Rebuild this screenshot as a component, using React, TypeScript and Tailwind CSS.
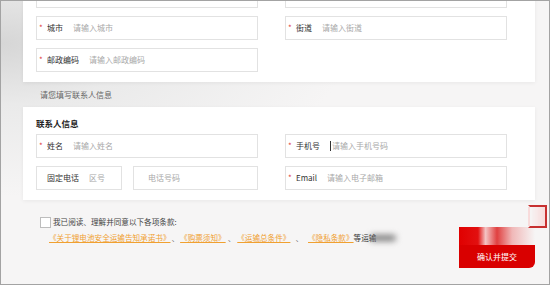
import React from 'react';

const FONT = { fontFamily: '"Noto Sans CJK SC", "Noto Sans", sans-serif' };

function Field({
  label,
  placeholder,
  required = true,
  width = 'w-[222px]',
  cursor = false,
}: {
  label?: string;
  placeholder?: string;
  required?: boolean;
  width?: string;
  cursor?: boolean;
}) {
  return (
    <div className={`${width} flex h-[24px] items-center border border-[#e2e2e2] bg-white pl-[2px] text-[8px] leading-none`}>
      {required ? <span className="w-[8px] text-[#e04040]">*</span> : <span className="w-[8px]" />}
      {label && <span className="mr-[10px] text-[#333]">{label}</span>}
      {cursor && <span className="mr-[1px] h-[10px] w-[1px] bg-[#333]" />}
      {placeholder && <span className="text-[#a9a9a9]">{placeholder}</span>}
    </div>
  );
}

export default function App() {
  return (
    <div
      className="relative h-[285px] w-[550px] overflow-hidden border border-[#a3a3a3] bg-[#f6f5f5] bg-[radial-gradient(ellipse_at_0%_15%,#d6d6d6_0%,#eaeaea_18%,#f6f5f5_45%)]"
      style={FONT}
    >
      <div className="flex flex-col pl-[22px]">
        {/* address card, scrolled partly out of view */}
        <div className="mt-[-27px] flex w-[512px] flex-col gap-2 bg-white px-[13px] pb-[10px] pt-[10px] shadow-[0_1px_4px_rgba(0,0,0,0.06)]">
          <div className="flex gap-[27px]">
            <div className="h-[24px] w-[222px] border border-[#e2e2e2]" />
            <div className="h-[24px] w-[222px] border border-[#e2e2e2]" />
          </div>
          <div className="flex gap-[27px]">
            <Field label="城市" placeholder="请输入城市" />
            <Field label="街道" placeholder="请输入街道" />
          </div>
          <div className="flex">
            <Field label="邮政编码" placeholder="请输入邮政编码" />
          </div>
        </div>

        <div className="flex h-[25px] items-center pl-[17px] text-[8px] text-[#666]">请您填写联系人信息</div>

        {/* contact card */}
        <div className="flex w-[512px] flex-col bg-white px-[13px] pb-[10px] pt-[11px] shadow-[0_1px_4px_rgba(0,0,0,0.06)]">
          <div className="mb-[6px] h-[10px] text-[8.5px] font-bold leading-[10px] text-[#222]">联系人信息</div>
          <div className="flex flex-col gap-2">
            <div className="flex gap-[27px]">
              <Field label="姓名" placeholder="请输入姓名" />
              <Field label="手机号" placeholder="请输入手机号码" cursor />
            </div>
            <div className="flex gap-[27px]">
              <div className="flex w-[222px] gap-[11px]">
                <Field label="固定电话" placeholder="区号" required={false} width="w-[86px]" />
                <div className="flex h-[24px] w-[125px] items-center border border-[#e2e2e2] pl-[14px] text-[8px] text-[#a9a9a9]">
                  电话号码
                </div>
              </div>
              <Field label="Email" placeholder="请输入电子邮箱" />
            </div>
          </div>
        </div>

        {/* agreement + submit */}
        <div className="flex w-[512px] items-start justify-between">
          <div className="flex flex-col pl-[17px] pt-[14px] text-[7.6px] leading-[16px]">
            <div className="flex items-center gap-[2px] text-[#444]">
              <span className="h-[11px] w-[11px] border border-[#bdbdbd] bg-white" />
              <span>我已阅读、理解并同意以下各项条款:</span>
            </div>
            <div className="flex items-center pl-[9px] text-[#f0a030]">
              <span className="underline">《关于锂电池安全运输告知承诺书》</span>
              <span className="mx-[1px] text-[#555]">、</span>
              <span className="underline">《购票须知》</span>
              <span className="mx-[2px] text-[#555]">、</span>
              <span className="underline">《运输总条件》</span>
              <span className="mx-[5px] text-[#555]">、</span>
              <span className="underline">《隐私条款》</span>
              <span className="text-[#333]">等运输</span>
              <span className="ml-[-6px] h-[6px] w-[26px] rounded-full bg-[#777] blur-[3px]" />
            </div>
          </div>
          <div className="relative mt-[27px] flex w-[76px] flex-col">
            <div className="h-[18px] w-[76px] bg-[linear-gradient(90deg,#e00000_0%,#e21010_25%,#f4c4c4_35%,#e04040_50%,#f0b8b8_70%,rgba(255,255,255,0)_100%)]" />
            <div className="flex h-[23px] w-[76px] items-center justify-center rounded-br-[6px] bg-[#d90000] text-[8px] text-white">
              确认并提交
            </div>
            <div className="absolute right-[-12px] top-[-22px] h-[23px] w-[19px] border-2 border-[#c73030] border-l-transparent bg-[linear-gradient(90deg,rgba(255,255,255,0),rgba(250,200,200,0.6))]" />
          </div>
        </div>
      </div>
    </div>
  );
}
